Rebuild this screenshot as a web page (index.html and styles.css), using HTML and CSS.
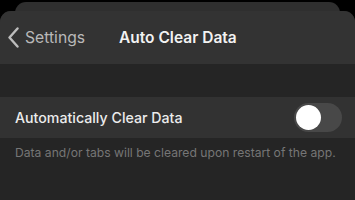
FILE: index.html
```html
<!DOCTYPE html>
<html lang="en">
<head>
  <meta charset="UTF-8">
  <title>Auto Clear Data</title>
  <link rel="stylesheet" href="styles.css">
</head>
<body>
  <div class="back-card"></div>
  <div class="sheet">
    <!-- nav bar -->
    <div class="nav">
      <a class="back" href="#">
        <svg width="11" height="21" viewBox="0 0 11 21"><path d="M9.5 1.5 L1.5 10.5 L9.5 19.5" fill="none" stroke="#bdbdbd" stroke-width="2.4" stroke-linecap="round" stroke-linejoin="round"/></svg>
        <span>Settings</span>
      </a>
      <div class="title">Auto Clear Data</div>
    </div>

    <div class="content">
      <div class="row">
        <span class="row-label">Automatically Clear Data</span>
        <div class="toggle"><div class="knob"></div></div>
      </div>
      <p class="note">Data and/or tabs will be cleared upon restart of the app.</p>
    </div>
  </div>
</body>
</html>
```

FILE: styles.css
```css
* {
  box-sizing: border-box;
  font-family: Inter, "Noto Sans", sans-serif;
}

body {
  margin: 0;
  width: 355px;
  height: 200px;
  background: #000;
  overflow: hidden;
  position: relative;
}

.back-card {
  position: absolute;
  left: 15px;
  right: 15px;
  top: 2px;
  height: 40px;
  background: #2f2f2f;
  border-radius: 11px 11px 0 0;
}

.sheet {
  position: relative;
  margin-top: 11px;
  height: 189px;
  background: #252525;
  border-radius: 11px 11px 0 0;
  overflow: hidden;
}

.nav {
  height: 53px;
  background: #333;
  display: flex;
  align-items: center;
  position: relative;
}

.back {
  display: flex;
  align-items: center;
  gap: 6px;
  padding-left: 8px;
  color: #b9b9b9;
  text-decoration: none;
  font-size: 15.7px;
}

.title {
  position: absolute;
  left: 119px;
  color: #f2f2f2;
  font-size: 15.5px;
  font-weight: 600;
}

.content {
  padding-top: 33px;
}

.row {
  height: 41px;
  background: #323232;
  display: flex;
  align-items: center;
  justify-content: space-between;
  padding: 0 13px 0 15px;
}

.row-label {
  color: #ececec;
  font-size: 14.2px;
  font-weight: 500;
}

.toggle {
  width: 48px;
  height: 29px;
  border-radius: 15px;
  background: #484848;
  padding: 2px;
}

.knob {
  width: 25px;
  height: 25px;
  border-radius: 50%;
  background: #fff;
}

.note {
  margin: 7px 0 0 15px;
  color: #767676;
  font-size: 12.15px;
}
```
